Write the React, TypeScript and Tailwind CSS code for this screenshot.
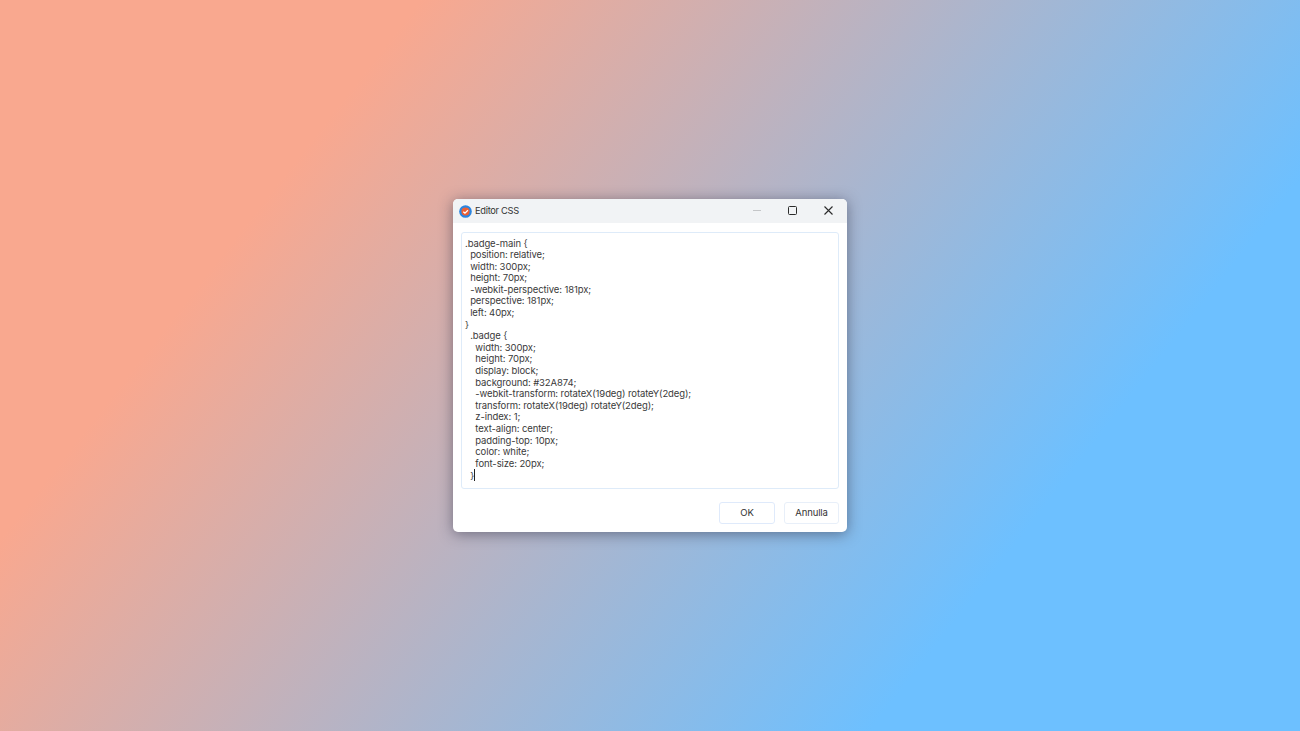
const cssLines = [
  '.badge-main {',
  '  position: relative;',
  '  width: 300px;',
  '  height: 70px;',
  '  -webkit-perspective: 181px;',
  '  perspective: 181px;',
  '  left: 40px;',
  '}',
  '  .badge {',
  '    width: 300px;',
  '    height: 70px;',
  '    display: block;',
  '    background: #32A874;',
  '    -webkit-transform: rotateX(19deg) rotateY(2deg);',
  '    transform: rotateX(19deg) rotateY(2deg);',
  '    z-index: 1;',
  '    text-align: center;',
  '    padding-top: 10px;',
  '    color: white;',
  '    font-size: 20px;',
];

function AppIcon() {
  return (
    <svg width="13" height="13" viewBox="0 0 14 14" fill="none">
      <circle cx="7" cy="7" r="6.8" fill="#2a85e0" />
      <circle cx="7" cy="7" r="4.4" fill="#ec5f35" />
      <path d="M4.6 7.2 6.4 8.7 9.6 5.6" stroke="#fff" strokeWidth="1.3" />
    </svg>
  );
}

export default function App() {
  return (
    <div className="flex h-[731px] w-full items-center justify-center overflow-hidden bg-[linear-gradient(128deg,#f9a88f_22.5%,#6dc0ff_77%)] font-['Inter',sans-serif]">
      <div className="flex h-[333px] w-[394px] flex-col overflow-hidden rounded-[5px] bg-white shadow-[0_2px_14px_rgba(40,40,60,0.5)]">
        {/* Title bar */}
        <div className="flex h-[24px] shrink-0 items-center bg-[#f1f3f5] pl-[6px]">
          <AppIcon />
          <span className="ml-[3px] text-[9.3px] tracking-[-0.3px] text-[#333]">Editor CSS</span>
          <div className="mb-[2px] ml-auto flex items-center">
            <span className="mr-[27px] h-px w-[8px] bg-[#c4c6c8]" />
            <span className="mr-[27px] h-[9px] w-[9px] rounded-[1.5px] border-[1.5px] border-[#2b2b2b]" />
            <svg width="9" height="9" viewBox="0 0 9 9" className="mr-[14px]" stroke="#2b2b2b" strokeWidth="1.1">
              <path d="M0.5 0.5 8.5 8.5M8.5 0.5 0.5 8.5" />
            </svg>
          </div>
        </div>

        {/* Editor */}
        <div className="mx-[8px] mt-[9px] h-[257px] rounded-[3px] border border-[#deebf9] pl-[3px] pt-[4.5px]">
          <div className="whitespace-pre text-[9.5px] leading-[11.6px] tracking-[-0.1px] text-[#3a3a3a]">
            {cssLines.map((line, i) => (
              <div key={i}>{line}</div>
            ))}
            <div className="flex items-center">
              {'  }'}
              <span className="h-[12px] w-px bg-[#222]" />
            </div>
          </div>
        </div>

        {/* Footer */}
        <div className="mt-[13px] flex justify-end gap-[9px] pr-[8px]">
          <button className="h-[22px] w-[56px] rounded-[3px] border-[1.5px] border-[#dfeafb] text-[9.5px] text-[#333]">OK</button>
          <button className="h-[22px] w-[55px] rounded-[3px] border-[1.5px] border-[#e8eff9] text-[9.5px] tracking-[-0.1px] text-[#333]">Annulla</button>
        </div>
      </div>
    </div>
  );
}
